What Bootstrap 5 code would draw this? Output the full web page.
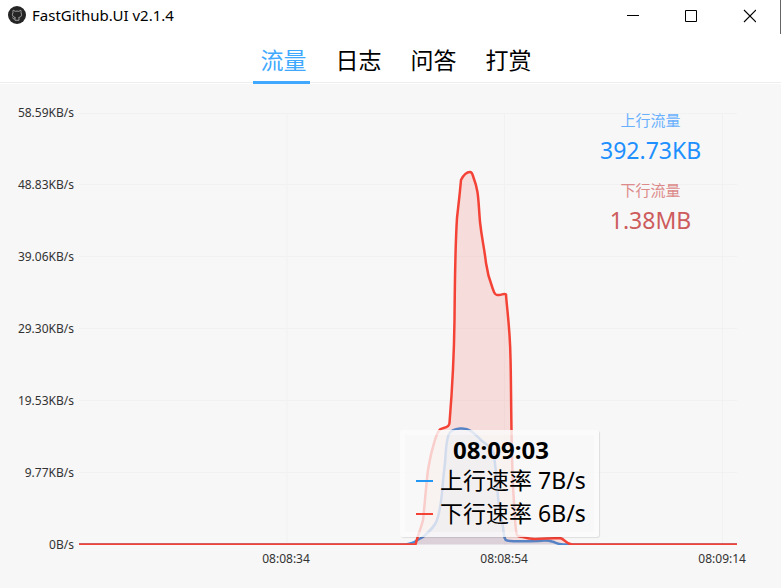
<!DOCTYPE html>
<html lang="zh-CN">
<head>
<meta charset="utf-8">
<meta name="viewport" content="width=device-width, initial-scale=1">
<title>FastGithub.UI v2.1.4</title>
<link rel="stylesheet" href="https://cdn.jsdelivr.net/npm/bootstrap@5.3.0/dist/css/bootstrap.min.css">
<style>
  body { font-family: "Noto Sans", "Noto Sans CJK SC", sans-serif; color: #000; background: #f7f7f7; }
  .titlebar { height: 34px; border-right: 1px solid #666; }
  .app-title { font-size: 15px; line-height: 22px; font-weight: 400; }
  .win-btn { width: 58px; height: 32px; line-height: 0; }
  .win-btns { padding-right: 2px; }
  .tabs { height: 50px; border-bottom: 1px solid #fff; box-shadow: inset 0 -1px #eee; padding-left: 6px; gap: 18px; }
  .tab-link { font-size: 23px; line-height: 32px; padding: 10px 3px 5px 8px; border-bottom: 3px solid transparent; margin-bottom: -1px; color: #000; }
  .tab-link.active { color: #40a9ff; border-color: #40a9ff; }
  .chart { padding: 21px 34px 21px 8px; }
  .axis { font-size: 12px; line-height: 16px; color: #333; }
  .axis-y { width: 66px; }
  .plot { margin: 8px 10px 8px 5px; }
  .plot svg { width: 100%; height: 100%; }
  .plot-lines path { vector-effect: non-scaling-stroke; }
  .axis-x { margin-left: 34.4%; margin-right: 1px; margin-top: -2px; }
  .totals { top: -3px; right: 36px; width: 101px; }
  .total-name { font-size: 15px; line-height: 20px; }
  .total-value { font-size: 23px; line-height: 40px; margin-bottom: 10px; }
  .up-name { color: #69b1ff; } .up-value { color: #1e90ff; }
  .down-name { color: #dc8a8a; } .down-value { color: #cd5c5c; }
  .tip { left: 48.8%; top: 73.4%; padding: 0 8px 2px 11px; border: 5px solid rgba(255,255,255,.3); border-radius: 3px; background: rgba(249,249,249,.76); background-clip: border-box; box-shadow: 1px 1px 1px rgba(0,0,0,.1); white-space: nowrap; }
  .tip-time { font-size: 24px; line-height: 29px; font-weight: 700; }
  .tip-row { font-size: 23px; line-height: 33px; gap: 7px; }
  .dash { width: 17px; height: 2px; }
  .dash-up { background: #2196f3; } .dash-down { background: #f44336; }
</style>
<script src="https://cdn.jsdelivr.net/npm/bootstrap@5.3.0/dist/js/bootstrap.bundle.min.js"></script>
</head>
<body class="min-vh-100 d-flex flex-column overflow-hidden">
<header class="bg-white">
  <div class="titlebar d-flex align-items-start">
    <div class="d-flex align-items-center gap-1 ps-2 pt-1 me-auto">
      <svg width="20" height="20" viewBox="0 0 20 20" aria-hidden="true">
        <circle cx="9" cy="10" r="9" fill="#252525"/>
        <path d="M5.2 5.2 7.2 6.3Q9 5.9 10.8 6.3L12.8 5.2Q13.3 6.5 13 7.4Q14.8 11.8 10.6 12.6Q11.2 13.3 11 15.3H7V14.2Q5.4 14.5 4.5 12.5M7 14V13.3L7.4 12.6Q3.2 11.8 5 7.4Q4.7 6.4 5.2 5.2" fill="none" stroke="#aaa" stroke-width=".9"/>
      </svg>
      <h1 class="app-title m-0">FastGithub.UI v2.1.4</h1>
    </div>
    <div class="win-btns d-flex">
      <button type="button" class="win-btn btn rounded-0 border-0 p-0" aria-label="最小化"><svg width="14" height="14" viewBox="0 0 14 14"><path d="M1 6.5H13" stroke="#000"/></svg></button>
      <button type="button" class="win-btn btn rounded-0 border-0 p-0" aria-label="最大化"><svg width="14" height="14" viewBox="0 0 14 14"><path d="M1.5 1.5H12.5V12.5H1.5Z" fill="none" stroke="#000"/></svg></button>
      <button type="button" class="win-btn btn rounded-0 border-0 p-0" aria-label="关闭"><svg width="14" height="14" viewBox="0 0 14 14"><path d="M2 1 14 13M14 1 2 13" stroke="#000" stroke-width="1.1"/></svg></button>
    </div>
  </div>
  <nav class="tabs d-flex justify-content-center">
    <a href="#" class="tab-link text-decoration-none active" aria-current="page">流量</a>
    <a href="#" class="tab-link text-decoration-none">日志</a>
    <a href="#" class="tab-link text-decoration-none">问答</a>
    <a href="#" class="tab-link text-decoration-none">打赏</a>
  </nav>
</header>
<main class="chart flex-grow-1 d-flex flex-column">
  <div class="flex-grow-1 d-flex">
    <div class="axis axis-y d-flex flex-column justify-content-between text-end">
      <span>58.59KB/s</span><span>48.83KB/s</span><span>39.06KB/s</span><span>29.30KB/s</span><span>19.53KB/s</span><span>9.77KB/s</span><span>0B/s</span>
    </div>
    <div class="plot flex-grow-1 position-relative">
      <svg class="plot-lines position-absolute top-0 start-0" viewBox="79 113 658 432" preserveAspectRatio="none" role="img" aria-label="流量">
        <path d="M79 113.5H737M79 184.5H737M79 256.5H737M79 328.5H737M79 400.5H737M79 472.5H737M287 113V545M504.500 113V545M722.500 113V545" fill="none" stroke="#f1f1f1"/>
        <path d="M79 544.5H405C409 544 413 543 416 541C419 539 421 538 423 537C431 530 435 526 437 520C440 511 441 503 442 493C443 480 444 471 445 463C446 450 446 440 449 434C451 430 455 429 460 428.500C465 428 468 429 471 431C475 434 479 438 482 441C489 446 493 449 494 455C496 470 497 480 498 497C499 509 501 516 503 527C504 535 504 540 507 540.500C516 542 529 541 538 541Q548 540 552 541.500C557 543 557 544 563 544.500H737" fill="#2195f2" fill-opacity=".14" stroke="#3d8fdf" stroke-width="2.500"/>
        <path d="M79 544.500H415.500C418 535 421 528 423 520C425 502 426 486 428 470C430 459 431 453 433 447C436 435 438 430 441 429C445 427 449 428 449.500 423C453 380 454 360 454.500 320C455 275 455 250 457 218C459 200 460 192 461 180C463 176 466 172 470 172C472 172 472.500 174 473 176C479 192 478 198 480 222C482 240 484 246 486 263C488 278 491 284 494 292C496 296 497 295 499 295C502 295 504 293 506 294.500C507 310 510 328 510.500 358C511 375 511 400 511.500 430C512 455 512 475 514 503C515 515 515 530 517 535C519 537 520 536.500 523 537C526 538 530 539 535 539C544 539 549 538 560 538C565 539 566 544 572 544.500H737" fill="#f44336" fill-opacity=".15" stroke="#f44336" stroke-width="2.500"/>
      </svg>
      <section class="totals position-absolute text-center">
        <div class="total-name up-name">上行流量</div>
        <div class="total-value up-value">392.73KB</div>
        <div class="total-name down-name">下行流量</div>
        <div class="total-value down-value mb-0">1.38MB</div>
      </section>
      <div class="tip position-absolute">
        <div class="tip-time text-center">08:09:03</div>
        <div class="tip-row d-flex align-items-center"><span class="dash dash-up"></span><span>上行速率 7B/s</span></div>
        <div class="tip-row d-flex align-items-center"><span class="dash dash-down"></span><span>下行速率 6B/s</span></div>
      </div>
    </div>
  </div>
  <div class="axis axis-x d-flex justify-content-between">
    <span>08:08:34</span><span>08:08:54</span><span>08:09:14</span>
  </div>
</main>
</body>
</html>
